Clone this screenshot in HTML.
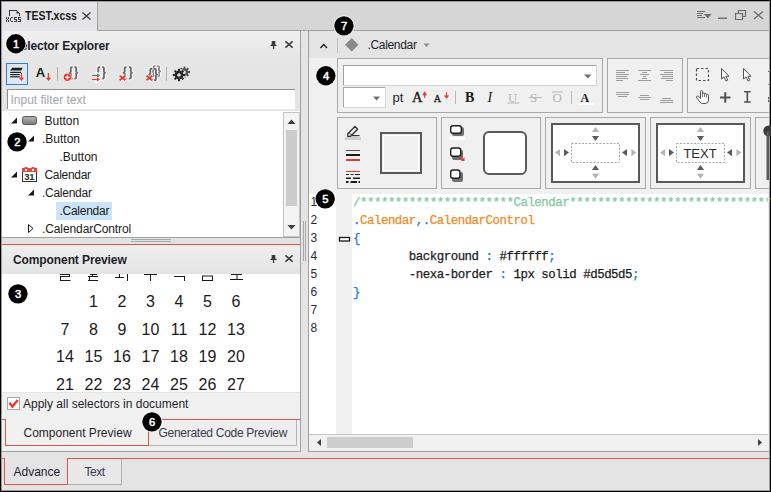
<!DOCTYPE html>
<html><head><meta charset="utf-8">
<style>
*{margin:0;padding:0}
html,body{width:771px;height:492px;overflow:hidden;background:#000}
svg{display:block;font-family:"Liberation Sans",sans-serif;font-size:12px}
</style></head><body>
<svg width="771" height="492" viewBox="0 0 771 492">
<!-- frame -->
<rect x="0" y="0" width="771" height="492" fill="#000"/>
<rect x="1" y="1" width="769" height="490" fill="#9c9c9c"/>
<rect x="2" y="2" width="767" height="488" fill="#e4e4e4"/>
<!-- tab bar -->
<rect x="2" y="2" width="767" height="28" fill="#d6d6d6"/>
<rect x="97" y="30" width="672" height="1" fill="#a3a3a3"/>
<rect x="2" y="2" width="95" height="29" fill="#e4e4e6"/>
<rect x="97" y="2" width="1" height="29" fill="#a3a3a3"/>
<!-- xcss file icon -->
<g fill="#3a3a3a">
<rect x="9" y="10" width="1" height="6"/><rect x="9" y="10" width="8" height="1"/><rect x="19" y="13" width="1" height="3"/>
<path d="M16.5 10L20 13.5H16.5Z"/>
<rect x="6" y="17" width="1" height="1"/><rect x="6" y="18" width="1" height="1"/><rect x="6" y="20" width="1" height="1"/><rect x="6" y="21" width="1" height="1"/><rect x="7" y="19" width="1" height="1"/><rect x="8" y="17" width="1" height="1"/><rect x="8" y="18" width="1" height="1"/><rect x="8" y="20" width="1" height="1"/><rect x="8" y="21" width="1" height="1"/><rect x="10" y="18" width="1" height="1"/><rect x="10" y="19" width="1" height="1"/><rect x="10" y="20" width="1" height="1"/><rect x="11" y="17" width="1" height="1"/><rect x="11" y="21" width="1" height="1"/><rect x="12" y="17" width="1" height="1"/><rect x="12" y="21" width="1" height="1"/><rect x="14" y="17" width="1" height="1"/><rect x="14" y="18" width="1" height="1"/><rect x="14" y="19" width="1" height="1"/><rect x="14" y="21" width="1" height="1"/><rect x="15" y="17" width="1" height="1"/><rect x="15" y="19" width="1" height="1"/><rect x="15" y="21" width="1" height="1"/><rect x="16" y="17" width="1" height="1"/><rect x="16" y="19" width="1" height="1"/><rect x="16" y="20" width="1" height="1"/><rect x="16" y="21" width="1" height="1"/><rect x="18" y="17" width="1" height="1"/><rect x="18" y="18" width="1" height="1"/><rect x="18" y="19" width="1" height="1"/><rect x="18" y="21" width="1" height="1"/><rect x="19" y="17" width="1" height="1"/><rect x="19" y="19" width="1" height="1"/><rect x="19" y="21" width="1" height="1"/><rect x="20" y="17" width="1" height="1"/><rect x="20" y="19" width="1" height="1"/><rect x="20" y="20" width="1" height="1"/><rect x="20" y="21" width="1" height="1"/>
</g>
<text transform="translate(25 19.5) scale(0.875 1)" font-weight="bold" fill="#1a1a1a">TEST.xcss</text>
<path d="M82.5 12.5L90.5 19.5M90.5 12.5L82.5 19.5" stroke="#3a3a3a" stroke-width="1.2"/>
<!-- window buttons -->
<g fill="#707070">
<rect x="697" y="11" width="8" height="1"/><rect x="697" y="13" width="6" height="1"/><rect x="697" y="15" width="5" height="1"/><rect x="697" y="17" width="8" height="1"/>
<path d="M704 14H711.5L707.75 18.5Z"/>
<rect x="718" y="17.5" width="9" height="1.5"/>
</g>
<path d="M735.5 13.5H742.5V19.5H735.5ZM738.5 13.5V10.5H745.5V16.5H742.5" fill="none" stroke="#6c6c6c" stroke-width="1.2"/>
<path d="M754 11.5L763 19M763 11.5L754 19" stroke="#6c6c6c" stroke-width="1.3"/>
<!-- ===== LEFT PANEL ===== -->
<defs>
<linearGradient id="lpg" x1="0" y1="0" x2="0" y2="1">
<stop offset="0" stop-color="#f0f0f0"/><stop offset="0.35" stop-color="#e6e6e6"/><stop offset="1" stop-color="#e3e3e3"/>
</linearGradient>
<linearGradient id="cpg" x1="0" y1="0" x2="0" y2="1">
<stop offset="0" stop-color="#efefef"/><stop offset="1" stop-color="#e3e3e3"/>
</linearGradient>
</defs>
<rect x="2" y="31" width="298" height="80" fill="url(#lpg)"/>
<rect x="300" y="31" width="1" height="421" fill="#a0a0a0"/>
<rect x="2" y="451" width="299" height="1" fill="#a0a0a0"/>
<text x="13" y="49.5" font-weight="bold" letter-spacing="-0.17" fill="#1e1e2a">Selector Explorer</text>
<!-- pin + close -->
<g fill="#3a3a3a">
<path d="M271.7 41H275.3V44.2L277.1 46H269.9L271.7 44.2Z"/><rect x="272.9" y="46" width="1.3" height="3"/>
</g>
<path d="M285.4 41.4L292.6 47.6M292.6 41.4L285.4 47.6" stroke="#3a3a3a" stroke-width="1.5"/>
<!-- toolbar button 1 pressed -->
<rect x="6.5" y="63.5" width="21" height="21" fill="#dde6f1" stroke="#2f7fd6" stroke-width="1"/>
<g fill="#1e1e1e">
<path d="M12.2 67.8H22.8L21.2 70.6H10.2Z"/>
<rect x="10.2" y="71.8" width="11" height="1.2"/><rect x="10.2" y="74" width="9.5" height="1.2"/><rect x="10.2" y="76.2" width="9.5" height="1.2"/>
</g>
<g fill="#e8392a">
<rect x="20.8" y="73" width="1.3" height="6"/><path d="M18.8 77.8H24.1L21.45 81Z"/>
</g>
<text x="35.8" y="77" font-weight="bold" font-size="13" fill="#1e1e1e">A</text>
<g fill="#e8392a"><rect x="47.8" y="73" width="1.3" height="6"/><path d="M45.8 77.8H51.1L48.45 81Z"/></g>
<rect x="57" y="67" width="1" height="14" fill="#b0b0b0"/>
<!-- braces icons -->
<path d="M72.60 67.10H71.70Q70.80 67.10 70.80 68.10V71.75L69.80 72.85L70.80 73.95V77.60Q70.80 78.60 71.70 78.60H72.60M74.40 67.10H75.30Q76.20 67.10 76.20 68.10V71.75L77.20 72.85L76.20 73.95V77.60Q76.20 78.60 75.30 78.60H74.40" fill="none" stroke="#fff" stroke-width="3.6" stroke-linejoin="round" opacity="0.9"/><path d="M72.60 67.10H71.70Q70.80 67.10 70.80 68.10V71.75L69.80 72.85L70.80 73.95V77.60Q70.80 78.60 71.70 78.60H72.60M74.40 67.10H75.30Q76.20 67.10 76.20 68.10V71.75L77.20 72.85L76.20 73.95V77.60Q76.20 78.60 75.30 78.60H74.40" fill="none" stroke="#6a6a6a" stroke-width="1.9"/>
<path d="M100.10 67.10H99.20Q98.30 67.10 98.30 68.10V71.75L97.30 72.85L98.30 73.95V77.60Q98.30 78.60 99.20 78.60H100.10M102.10 67.10H103.00Q103.90 67.10 103.90 68.10V71.75L104.90 72.85L103.90 73.95V77.60Q103.90 78.60 103.00 78.60H102.10" fill="none" stroke="#fff" stroke-width="3.6" stroke-linejoin="round" opacity="0.9"/><path d="M100.10 67.10H99.20Q98.30 67.10 98.30 68.10V71.75L97.30 72.85L98.30 73.95V77.60Q98.30 78.60 99.20 78.60H100.10M102.10 67.10H103.00Q103.90 67.10 103.90 68.10V71.75L104.90 72.85L103.90 73.95V77.60Q103.90 78.60 103.00 78.60H102.10" fill="none" stroke="#6a6a6a" stroke-width="1.9"/>
<path d="M126.50 67.10H125.60Q124.70 67.10 124.70 68.10V71.75L123.70 72.85L124.70 73.95V77.60Q124.70 78.60 125.60 78.60H126.50M129.00 67.10H129.90Q130.80 67.10 130.80 68.10V71.75L131.80 72.85L130.80 73.95V77.60Q130.80 78.60 129.90 78.60H129.00" fill="none" stroke="#fff" stroke-width="3.6" stroke-linejoin="round" opacity="0.9"/><path d="M126.50 67.10H125.60Q124.70 67.10 124.70 68.10V71.75L123.70 72.85L124.70 73.95V77.60Q124.70 78.60 125.60 78.60H126.50M129.00 67.10H129.90Q130.80 67.10 130.80 68.10V71.75L131.80 72.85L130.80 73.95V77.60Q130.80 78.60 129.90 78.60H129.00" fill="none" stroke="#6a6a6a" stroke-width="1.9"/>
<path d="M155.40 66.10H154.50Q153.60 66.10 153.60 67.10V70.20L152.60 71.30L153.60 72.40V75.50Q153.60 76.50 154.50 76.50H155.40M157.20 66.10H158.10Q159.00 66.10 159.00 67.10V70.20L160.00 71.30L159.00 72.40V75.50Q159.00 76.50 158.10 76.50H157.20" fill="none" stroke="#fff" stroke-width="3.6" stroke-linejoin="round" opacity="0.9"/><path d="M155.40 66.10H154.50Q153.60 66.10 153.60 67.10V70.20L152.60 71.30L153.60 72.40V75.50Q153.60 76.50 154.50 76.50H155.40M157.20 66.10H158.10Q159.00 66.10 159.00 67.10V70.20L160.00 71.30L159.00 72.40V75.50Q159.00 76.50 158.10 76.50H157.20" fill="none" stroke="#8a8a8a" stroke-width="1.9"/>
<path d="M152.10 68.80H151.20Q150.30 68.80 150.30 69.80V73.40L149.30 74.50L150.30 75.60V79.20Q150.30 80.20 151.20 80.20H152.10M154.10 68.80H155.00Q155.90 68.80 155.90 69.80V73.40L156.90 74.50L155.90 75.60V79.20Q155.90 80.20 155.00 80.20H154.10" fill="none" stroke="#fff" stroke-width="3.6" stroke-linejoin="round" opacity="0.9"/><path d="M152.10 68.80H151.20Q150.30 68.80 150.30 69.80V73.40L149.30 74.50L150.30 75.60V79.20Q150.30 80.20 151.20 80.20H152.10M154.10 68.80H155.00Q155.90 68.80 155.90 69.80V73.40L156.90 74.50L155.90 75.60V79.20Q155.90 80.20 155.00 80.20H154.10" fill="none" stroke="#6a6a6a" stroke-width="1.9"/>
<circle cx="67.4" cy="77.3" r="4.3" fill="#fff" opacity="0.8"/><circle cx="67.4" cy="77.3" r="3.7" fill="#e8392a"/>
<path d="M65.1 77.3H69.7M67.4 75V79.6" stroke="#fff" stroke-width="1.3"/>
<path d="M91.5 75.5H98.5M91.5 79.5H98.5M96.5 72.8L101 75.5L96.5 78.2ZM96.5 76.8L101 79.5L96.5 82.2Z" stroke="#fff" stroke-width="2.4" fill="#fff" stroke-linejoin="round" opacity="0.9"/>
<path d="M92 75.5H98" stroke="#6a6a6a" stroke-width="1.3"/><path d="M97 73.5L100.2 75.5L97 77.5Z" fill="#6a6a6a"/>
<path d="M92 79.5H98" stroke="#e8392a" stroke-width="1.3"/><path d="M97 77.5L100.2 79.5L97 81.5Z" fill="#e8392a"/>
<path d="M119.6 75.6L125.4 80.3M125.4 75.6L119.6 80.3" stroke="#fff" stroke-width="3.4" opacity="0.8"/>
<path d="M119.6 75.6L125.4 80.3M125.4 75.6L119.6 80.3" stroke="#e8392a" stroke-width="1.8"/>
<path d="M146.4 75.6L152.4 80.3M152.4 75.6L146.4 80.3" stroke="#fff" stroke-width="3.4" opacity="0.8"/>
<path d="M146.4 75.6L152.4 80.3M152.4 75.6L146.4 80.3" stroke="#e8392a" stroke-width="1.8"/>
<rect x="166" y="67" width="1" height="14" fill="#b0b0b0"/>
<!-- gear -->
<circle cx="184.5" cy="72" r="3.8" fill="#555"/><path d="M187.80 72.00L190.10 72.00M186.83 74.33L188.46 75.96M184.50 75.30L184.50 77.60M182.17 74.33L180.54 75.96M181.20 72.00L178.90 72.00M182.17 69.67L180.54 68.04M184.50 68.70L184.50 66.40M186.83 69.67L188.46 68.04" stroke="#555" stroke-width="1.8"/><circle cx="184.5" cy="72" r="1.3" fill="#e4e4e4"/>
<circle cx="179" cy="75" r="6.4" fill="#e4e4e4" opacity="0.8"/><circle cx="179" cy="75" r="4.4" fill="#2a2a2a"/><path d="M182.90 75.00L185.20 75.00M181.76 77.76L183.38 79.38M179.00 78.90L179.00 81.20M176.24 77.76L174.62 79.38M175.10 75.00L172.80 75.00M176.24 72.24L174.62 70.62M179.00 71.10L179.00 68.80M181.76 72.24L183.38 70.62" stroke="#2a2a2a" stroke-width="2.1"/><circle cx="179" cy="75" r="1.8" fill="#e4e4e4"/>
<!-- filter input -->
<rect x="7" y="89" width="288" height="21" fill="#fff"/>
<rect x="7" y="89" width="288" height="1" fill="#8e8e8e"/>
<rect x="7" y="89" width="1" height="21" fill="#8e8e8e"/>
<rect x="7" y="109" width="288" height="1" fill="#e9e9e9"/>
<text x="10.5" y="103.8" fill="#a4a4ac">Input filter text</text>
<!-- tree -->
<rect x="2" y="111" width="298" height="126" fill="#fff"/>
<rect x="2" y="237" width="298" height="1" fill="#a0a0a0"/>
<!-- tree scrollbar -->
<rect x="283" y="112" width="17" height="125" fill="#c4c4c4"/>
<rect x="284" y="113" width="15" height="123" fill="#f3f3f3"/>
<path d="M287.5 124H295.5L291.5 119.5Z" fill="#404040"/>
<rect x="286" y="130" width="11" height="76" fill="#cbcbcb"/>
<path d="M287.5 225H295.5L291.5 229.5Z" fill="#404040"/>
<g fill="#1a1a1a">
<path d="M11 123.5H17V117.5Z"/>
<path d="M28 141.5H34V135.5Z"/>
<path d="M11 177.5H17V171.5Z"/>
<path d="M28 195.5H34V189.5Z"/>
</g>
<path d="M28.5 224.5V232.5L33 228.5Z" fill="none" stroke="#1a1a1a" stroke-width="1"/>
<!-- button icon -->
<defs><linearGradient id="btg" x1="0" y1="0" x2="0" y2="1"><stop offset="0" stop-color="#b8b8b8"/><stop offset="1" stop-color="#7a7a7a"/></linearGradient></defs>
<rect x="22.5" y="116.5" width="14" height="8" rx="2" fill="url(#btg)" stroke="#555" stroke-width="1"/>
<!-- calendar icon -->
<rect x="22.5" y="171.5" width="14" height="10" fill="#fff" stroke="#333" stroke-width="1"/>
<rect x="22" y="168" width="15" height="4" fill="#e5483a"/>
<rect x="24.5" y="167" width="3" height="1" fill="#e5483a"/><rect x="31.5" y="167" width="3" height="1" fill="#e5483a"/>
<rect x="25" y="169" width="2" height="2" fill="#fff"/><rect x="32" y="169" width="2" height="2" fill="#fff"/>
<text x="24.3" y="179.9" font-weight="bold" font-size="9.4" letter-spacing="-0.2" fill="#2a2a2a">31</text>
<rect x="56" y="202" width="56" height="18" fill="#cce4f7"/>
<g fill="#1a1a1a">
<text x="44.5" y="124.7">Button</text>
<text x="42" y="143">.Button</text>
<text x="59.5" y="161">.Button</text>
<text x="44.5" y="179" letter-spacing="-0.3">Calendar</text>
<text x="42" y="196.5" letter-spacing="-0.27">.Calendar</text>
<text x="59.5" y="214.5" letter-spacing="-0.27">.Calendar</text>
<text x="42" y="232.5" letter-spacing="-0.1">.CalendarControl</text>
</g>
<!-- splitter -->
<rect x="2" y="238" width="298" height="6" fill="#e2e2e2"/>
<rect x="131" y="239" width="40" height="1" fill="#a8a8a8"/>
<rect x="131" y="241" width="40" height="1" fill="#a8a8a8"/>
<!-- component preview header -->
<rect x="2" y="245" width="298" height="29" fill="url(#cpg)"/>
<text x="13" y="263.7" font-weight="bold" letter-spacing="-0.1" fill="#1e1e2a">Component Preview</text>
<g fill="#3a3a3a"><path d="M271.7 255H275.3V258.2L277.1 260H269.9L271.7 258.2Z"/><rect x="272.9" y="260" width="1.3" height="3"/></g>
<path d="M285.4 255.4L292.6 261.6M292.6 255.4L285.4 261.6" stroke="#3a3a3a" stroke-width="1.5"/>
<!-- calendar preview -->
<rect x="2" y="274" width="298" height="118" fill="#fff"/>
<g fill="#1a1a1a">
<rect x="60" y="274" width="10" height="1"/><rect x="69" y="274" width="1" height="3"/><rect x="60" y="276" width="10" height="1"/><rect x="60" y="276" width="1" height="4"/><rect x="60" y="280" width="10.5" height="1"/>
<rect x="90" y="274" width="7" height="1"/><rect x="88" y="276" width="10" height="1"/><rect x="92" y="274" width="1" height="2"/><rect x="89" y="277" width="1" height="3"/><rect x="88" y="280" width="10" height="1"/>
<rect x="115" y="277" width="9" height="1"/><rect x="119" y="274" width="1" height="3"/><rect x="127" y="274" width="1" height="7"/>
<rect x="144" y="274" width="13" height="1"/><rect x="150" y="274" width="1" height="7"/>
<rect x="174" y="276" width="11" height="1"/><rect x="184" y="276" width="1" height="5"/>
<rect x="202.5" y="276" width="10" height="4.5" fill="none" stroke="#1a1a1a" stroke-width="1"/>
<rect x="231" y="274" width="11" height="1"/><rect x="236.5" y="274" width="1" height="5"/><rect x="230" y="279" width="13" height="1"/>
</g>
<g font-size="16" fill="#1a1a1a" text-anchor="middle">
<text x="93.5" y="307">1</text><text x="122" y="307">2</text><text x="150.5" y="307">3</text><text x="179" y="307">4</text><text x="207.5" y="307">5</text><text x="236" y="307">6</text>
<text x="65" y="335">7</text><text x="93.5" y="335">8</text><text x="122" y="335">9</text><text x="150.5" y="335">10</text><text x="179" y="335">11</text><text x="207.5" y="335">12</text><text x="236" y="335">13</text>
<text x="65" y="362">14</text><text x="93.5" y="362">15</text><text x="122" y="362">16</text><text x="150.5" y="362">17</text><text x="179" y="362">18</text><text x="207.5" y="362">19</text><text x="236" y="362">20</text>
<text x="65" y="390">21</text><text x="93.5" y="390">22</text><text x="122" y="390">23</text><text x="150.5" y="390">24</text><text x="179" y="390">25</text><text x="207.5" y="390">26</text><text x="236" y="390">27</text>
</g>
<!-- apply bar -->
<rect x="2" y="393" width="298" height="58" fill="#f0f0f0"/>
<rect x="7.5" y="397.5" width="12" height="12" fill="#fff" stroke="#a8a8a8" stroke-width="1"/>
<path d="M9.3 402.8L12.4 406.6L17.8 400" fill="none" stroke="#ec3b2c" stroke-width="2.3"/>
<text x="23" y="407.8" fill="#1e1e2a">Apply all selectors in document</text>
<!-- bottom tabs of left panel -->
<rect x="148" y="419" width="149" height="27" fill="#eeeeee"/>
<rect x="296" y="419" width="1" height="27" fill="#b4b4b4"/>
<rect x="148" y="445" width="149" height="1" fill="#b4b4b4"/>
<text x="23.5" y="437" fill="#1e1e2a">Component Preview</text>
<text x="158.5" y="436.5" letter-spacing="-0.28" fill="#3a3a4a">Generated Code Preview</text>
<g fill="#e05545">
<rect x="2" y="419" width="4" height="1"/>
<rect x="5" y="419" width="1" height="27"/>
<rect x="5" y="445" width="144" height="1"/>
<rect x="148" y="419" width="1" height="27"/>
<rect x="148" y="419" width="152" height="1"/>
<rect x="2" y="244" width="298" height="1"/>
</g>
<!-- ===== GAP ===== -->
<rect x="301" y="31" width="7" height="421" fill="#e4e4e4"/>
<rect x="308" y="31" width="1" height="421" fill="#a0a0a0"/>
<rect x="303" y="221" width="1" height="40" fill="#a8a8a8"/>
<rect x="305" y="221" width="1" height="40" fill="#a8a8a8"/>
<!-- ===== RIGHT PANEL ===== -->
<rect x="309" y="31" width="460" height="420" fill="#f0f0f0"/>
<rect x="309" y="31" width="460" height="27" fill="#e4e4e4"/>
<rect x="309" y="451" width="460" height="1" fill="#a0a0a0"/>
<path d="M320.5 48L323.75 44.5L327 48" fill="none" stroke="#1a1a1a" stroke-width="1.3"/>
<rect x="337" y="38" width="1" height="15" fill="#c0c0c0"/>
<path d="M351.75 38L358.5 44.75L351.75 51.5L345 44.75Z" fill="#8a8a8a"/>
<text x="367.5" y="48.7" letter-spacing="-0.33" fill="#1e1e2a">.Calendar</text>
<path d="M423.5 43.5H429.5L426.5 47Z" fill="#8a8a8a"/>
<!-- group 1: font -->
<rect x="337" y="58" width="266" height="55" fill="#a9a9a9"/>
<rect x="338" y="59" width="264" height="53" fill="#f0f0f0"/>
<rect x="343" y="65" width="254" height="21" fill="#d4d4d4"/>
<rect x="343" y="65" width="253" height="20" fill="#a0a0a0"/>
<rect x="344" y="66" width="252" height="19" fill="#fff"/>
<path d="M584 74.5H591.5L587.75 78.5Z" fill="#707070"/>
<rect x="343" y="87" width="43" height="21" fill="#d8d8d8"/>
<rect x="343" y="87" width="42" height="20" fill="#a8a8a8"/>
<rect x="344" y="88" width="41" height="19" fill="#fff"/>
<path d="M373 96.5H380L376.5 100.5Z" fill="#707070"/>
<text x="392.5" y="101.5" font-size="13" fill="#1e1e2a">pt</text>
<text x="412" y="101.8" font-family="Liberation Serif" font-size="14.6" fill="#1a1a1a" stroke="#1a1a1a" stroke-width="0.35">A</text>
<g fill="#e8392a"><rect x="424.1" y="93.8" width="1.2" height="4"/><path d="M422.3 95.3H427.1L424.7 91.3Z"/></g>
<text x="433.8" y="101.8" font-family="Liberation Serif" font-size="10.2" fill="#1a1a1a" stroke="#1a1a1a" stroke-width="0.3">A</text>
<g fill="#e8392a"><rect x="445.9" y="92.3" width="1.2" height="4"/><path d="M443.8 95.6H449.2L446.5 98.8Z"/></g>
<rect x="455" y="91" width="1" height="13" fill="#b8b8b8"/>
<text x="465" y="102.3" font-family="Liberation Serif" font-weight="bold" font-size="14" fill="#1a1a1a">B</text>
<text x="487.5" y="102.3" font-family="Liberation Serif" font-style="italic" font-size="14" fill="#1a1a1a">I</text>
<g font-family="Liberation Serif" font-size="13" fill="#b4b4b4">
<text x="508" y="102.3">U</text><text x="530" y="102.3">S</text><text x="552.5" y="102.3">O</text>
</g>
<rect x="507.5" y="102.5" width="12" height="1" fill="#b4b4b4"/>
<rect x="529" y="97" width="13" height="1" fill="#b4b4b4"/>
<rect x="552" y="91.5" width="11" height="1" fill="#b4b4b4"/>
<rect x="571" y="91" width="1" height="13" fill="#b8b8b8"/>
<text x="580.5" y="101.5" font-family="Liberation Serif" font-weight="bold" font-size="12" fill="#1a1a1a">A</text>
<rect x="578" y="103" width="16" height="2" fill="#fff"/>
<!-- group 2: align -->
<rect x="607" y="58" width="76" height="55" fill="#a9a9a9"/>
<rect x="608" y="59" width="74" height="53" fill="#f0f0f0"/>
<g fill="#9c9c9c">
<rect x="616" y="70" width="13" height="1"/>
<rect x="660" y="70" width="13" height="1"/>
<rect x="616" y="72" width="9" height="1"/>
<rect x="664" y="72" width="9" height="1"/>
<rect x="616" y="74" width="13" height="1"/>
<rect x="660" y="74" width="13" height="1"/>
<rect x="616" y="76" width="11" height="1"/>
<rect x="662" y="76" width="11" height="1"/>
<rect x="616" y="78" width="12" height="1"/>
<rect x="661" y="78" width="12" height="1"/>
<rect x="616" y="80" width="7" height="1"/>
<rect x="666" y="80" width="7" height="1"/>
<rect x="638.0" y="70" width="13" height="1"/>
<rect x="642.0" y="72" width="5" height="1"/>
<rect x="640.0" y="74" width="9" height="1"/>
<rect x="643.0" y="76" width="3" height="1"/>
<rect x="642.0" y="78" width="5" height="1"/>
<rect x="638.0" y="80" width="13" height="1"/>
<rect x="616.0" y="92" width="13" height="1"/>
<rect x="616.0" y="94" width="13" height="1"/>
<rect x="618.0" y="96" width="9" height="1"/>
<rect x="640.0" y="95" width="9" height="1"/>
<rect x="638.0" y="97" width="13" height="1"/>
<rect x="640.0" y="99" width="9" height="1"/>
<rect x="662.0" y="98" width="9" height="1"/>
<rect x="660.0" y="100" width="13" height="1"/>
<rect x="660.0" y="102" width="13" height="1"/>
</g>
<!-- group 3: tools -->
<rect x="687" y="58" width="82" height="55" fill="#a9a9a9"/>
<rect x="688" y="59" width="81" height="53" fill="#f0f0f0"/>
<rect x="696.5" y="68.5" width="12" height="12" fill="none" stroke="#505050" stroke-width="1.2" stroke-dasharray="2.5 2"/>
<path d="M721.5 68.5V79L724 76.8L726 81L727.8 80.2L725.8 76.2H729Z" fill="#fff" stroke="#505050" stroke-width="1"/>
<path d="M743.5 68.5V79L746 76.8L748 81L749.8 80.2L747.8 76.2H751Z" fill="#fff" stroke="#505050" stroke-width="1"/>
<path d="M700.5 98.5V91.5Q700.5 90.5 701.5 90.5Q702.5 90.5 702.5 91.5V94Q702.5 93 703.5 93Q704.5 93 704.5 94V94.5Q704.5 93.5 705.5 93.5Q706.5 93.5 706.5 94.5V95.5Q706.5 94.5 707.5 94.5Q708.5 94.5 708.5 95.5V100Q708.5 103.5 705 103.5H702.5Q700.8 103.5 699.8 101.8L696.5 97.5Q696 96.5 697 96Q698 95.7 699 96.8Z" fill="#fff" stroke="#505050" stroke-width="1"/>
<path d="M702.5 94V97M704.5 94.5V97M706.5 95.5V97.5" stroke="#505050" stroke-width="0.8"/>
<rect x="720" y="96.5" width="10.5" height="2" fill="#505050"/>
<rect x="724.25" y="92.2" width="2" height="10.5" fill="#505050"/>
<rect x="746.5" y="91" width="1.6" height="11.7" fill="#505050"/>
<rect x="744" y="91" width="6.8" height="1.4" fill="#505050"/>
<rect x="744" y="101.3" width="6.8" height="1.4" fill="#505050"/>
<rect x="768" y="71" width="1" height="1" fill="#555"/><rect x="768" y="84" width="1" height="1" fill="#777"/><rect x="768" y="97" width="1" height="2" fill="#555"/><rect x="768" y="100" width="1" height="2" fill="#555"/>
<!-- row 2 groups -->
<rect x="337" y="117" width="100" height="72" fill="#a9a9a9"/>
<rect x="338" y="118" width="98" height="70" fill="#f0f0f0"/>
<rect x="441" y="117" width="100" height="72" fill="#a9a9a9"/>
<rect x="442" y="118" width="98" height="70" fill="#f0f0f0"/>
<rect x="545" y="117" width="101" height="72" fill="#a9a9a9"/>
<rect x="546" y="118" width="99" height="70" fill="#f0f0f0"/>
<rect x="650" y="117" width="101" height="72" fill="#a9a9a9"/>
<rect x="651" y="118" width="99" height="70" fill="#f0f0f0"/>
<rect x="755" y="117" width="14" height="72" fill="#a9a9a9"/>
<rect x="756" y="118" width="13" height="70" fill="#f0f0f0"/>
<circle cx="768.8" cy="131" r="5.5" fill="#3a3a3a"/><rect x="766.5" y="131" width="2.5" height="49" fill="#5a5a5a"/>
<!-- group A -->
<path d="M347.8 133.8L355 126.6L357.6 129.2L350.4 136.4H347.8Z" fill="none" stroke="#333" stroke-width="1.4" stroke-linejoin="round"/>
<path d="M349 132.5L351.7 135.2" stroke="#333" stroke-width="1"/>
<rect x="352" y="135" width="7.5" height="1.2" fill="#333"/>
<rect x="345" y="137" width="16" height="3" fill="#cfcfcf"/>
<rect x="346" y="150" width="14" height="1" fill="#505050"/>
<rect x="346" y="154" width="14" height="2" fill="#1a1a1a"/>
<rect x="346" y="159" width="14" height="2" fill="#e8392a"/>
<rect x="346" y="171" width="14" height="1" fill="#e8392a"/>
<g fill="#1a1a1a"><rect x="346" y="174" width="3" height="1"/><rect x="350.5" y="174" width="3" height="1"/><rect x="355" y="174" width="5" height="1"/>
<rect x="346" y="177.5" width="5" height="1.5"/><rect x="353" y="177.5" width="7" height="1.5"/>
<rect x="346" y="181" width="2.5" height="2"/><rect x="350.5" y="181" width="6.5" height="2"/><rect x="358.5" y="181" width="1.5" height="2"/></g>
<rect x="380.5" y="132.5" width="41" height="41" fill="none" stroke="#fff" stroke-width="1"/><rect x="383.5" y="135.5" width="35" height="35" fill="none" stroke="#fff" stroke-width="1"/><rect x="381" y="133" width="40" height="40" fill="none" stroke="#5a5a5a" stroke-width="2"/>
<!-- group B -->
<g fill="#5a5a5a" opacity="0.85">
<rect x="452" y="127" width="12" height="9" rx="2"/>
<rect x="452" y="150" width="11" height="10" rx="2"/>
<rect x="452" y="172" width="11" height="10" rx="2"/>
</g>
<g fill="#fff" stroke="#1e1e1e" stroke-width="1.4">
<rect x="450.7" y="125.7" width="10.6" height="7.6" rx="2.2"/>
<rect x="450.7" y="148" width="10" height="8.3" rx="2.2"/>
<rect x="450.7" y="170" width="9.2" height="8.3" rx="2.2"/>
</g>
<rect x="449" y="137" width="16" height="3" fill="#fff"/>
<path d="M459.5 156.5L463.2 160.2" stroke="#e8392a" stroke-width="1.3"/><path d="M460.8 161H464.5V157.3Z" fill="#e8392a"/>
<rect x="484" y="132" width="42" height="42" rx="5" fill="#fff" stroke="#5a5a5a" stroke-width="2"/>
<!-- group C -->
<rect x="552" y="124" width="87" height="58" fill="#fff" stroke="#5a5a5a" stroke-width="2"/>
<rect x="571.5" y="143.5" width="48" height="19" fill="none" stroke="#a8a8a8" stroke-width="1" stroke-dasharray="2 1.5"/>
<g fill="#b4b4b4">
<path d="M591.9 132H599.1L595.5 127Z"/><path d="M591.9 173.8H599.1L595.5 178.8Z"/>
<path d="M560 149.0V156.2L555 152.6Z"/><path d="M631.4 149.0V156.2L636.4 152.6Z"/>
</g>
<g fill="#5a5a5a">
<path d="M591.9 136H599.1L595.5 141Z"/><path d="M591.9 170H599.1L595.5 165Z"/>
<path d="M564 149.0V156.2L569 152.6Z"/><path d="M627 149.0V156.2L622 152.6Z"/>
</g>
<!-- group D -->
<rect x="657" y="124" width="87" height="58" fill="#fff" stroke="#5a5a5a" stroke-width="2"/>
<rect x="676.5" y="143.5" width="48" height="19" fill="none" stroke="#a8a8a8" stroke-width="1" stroke-dasharray="2 1.5"/>
<g fill="#b4b4b4">
<path d="M696.9 132H704.1L700.5 127Z"/><path d="M696.9 173.8H704.1L700.5 178.8Z"/>
<path d="M665 149.0V156.2L660 152.6Z"/><path d="M736.4 149.0V156.2L741.4 152.6Z"/>
</g>
<g fill="#5a5a5a">
<path d="M696.9 136H704.1L700.5 141Z"/><path d="M696.9 170H704.1L700.5 165Z"/>
<path d="M669 149.0V156.2L674 152.6Z"/><path d="M732 149.0V156.2L727 152.6Z"/>
</g>
<text x="700" y="157.5" font-size="13" text-anchor="middle" fill="#2a2a2a">TEXT</text>
<!-- editor -->
<rect x="309" y="194" width="460" height="240" fill="#fff"/>
<rect x="336" y="194" width="16" height="240" fill="#f0f0f0"/>
<g font-size="12" fill="#2a2a3a">
<text x="310.5" y="206">1</text><text x="310.5" y="224">2</text><text x="310.5" y="242">3</text><text x="310.5" y="260">4</text><text x="310.5" y="278">5</text><text x="310.5" y="296">6</text><text x="310.5" y="314">7</text><text x="310.5" y="332">8</text>
</g>
<rect x="339.5" y="237.5" width="10" height="3.5" fill="#fff" stroke="#1a1a1a" stroke-width="1.3"/>
<g font-family="Liberation Mono" font-size="12.4" letter-spacing="-0.46" stroke-width="0.25">
<text x="353" y="206" fill="#80c8a0" stroke="#80c8a0">/**********************Calendar****************************************</text>
<text x="353" y="224"><tspan fill="#1f74e0" stroke="#1f74e0">.</tspan><tspan fill="#f28a1e" stroke="#f28a1e">Calendar</tspan><tspan fill="#1f74e0" stroke="#1f74e0">,.</tspan><tspan fill="#f28a1e" stroke="#f28a1e">CalendarControl</tspan></text>
<text x="353" y="242" fill="#1f74e0" stroke="#1f74e0">{</text>
<text x="353" y="260"><tspan fill="#1a1a1a" stroke="#1a1a1a">&#160;&#160;&#160;&#160;&#160;&#160;&#160;&#160;background&#160;</tspan><tspan fill="#1f74e0" stroke="#1f74e0">:</tspan><tspan fill="#1a1a1a" stroke="#1a1a1a">&#160;#ffffff</tspan><tspan fill="#1f74e0" stroke="#1f74e0">;</tspan></text>
<text x="353" y="278"><tspan fill="#1a1a1a" stroke="#1a1a1a">&#160;&#160;&#160;&#160;&#160;&#160;&#160;&#160;-nexa-border&#160;</tspan><tspan fill="#1f74e0" stroke="#1f74e0">:</tspan><tspan fill="#1a1a1a" stroke="#1a1a1a">&#160;1px&#160;solid&#160;#d5d5d5</tspan><tspan fill="#1f74e0" stroke="#1f74e0">;</tspan></text>
<text x="353" y="296" fill="#1f74e0" stroke="#1f74e0">}</text>
</g>
<!-- h scrollbar -->
<rect x="309" y="434" width="460" height="1" fill="#c8c8c8"/>
<rect x="309" y="435" width="460" height="16" fill="#f0f0f0"/>
<path d="M321 439V446L317 442.5Z" fill="#404040"/>
<rect x="327" y="437" width="86" height="11" fill="#cdcdcd"/>
<path d="M758 439V446L762 442.5Z" fill="#404040"/>
<rect x="768" y="189" width="1" height="262" fill="#ececec"/>
<!-- ===== BOTTOM STRIP ===== -->
<rect x="2" y="452" width="767" height="38" fill="#e4e4e4"/>
<rect x="67" y="458" width="55" height="27" fill="#e8e8e8"/>
<rect x="121" y="458" width="1" height="27" fill="#b0b0b0"/>
<rect x="67" y="484" width="55" height="1" fill="#b0b0b0"/>
<text x="13.5" y="476" fill="#1e1e2a">Advance</text>
<text x="84.5" y="476" letter-spacing="-0.45" fill="#3a3a4a">Text</text>
<g fill="#e05545">
<rect x="2" y="458" width="3" height="1"/>
<rect x="4" y="458" width="1" height="27"/>
<rect x="4" y="484" width="64" height="1"/>
<rect x="67" y="458" width="1" height="27"/>
<rect x="67" y="458" width="702" height="1"/>
</g>
<!-- ===== BADGES ===== -->
<g font-family="Liberation Sans" font-size="11.2" fill="#fff" stroke="#fff" stroke-width="0.5" text-anchor="middle">
<circle cx="15.85" cy="43.75" r="10.5" fill="#fff" stroke="none" opacity="0.85"/><circle cx="15.85" cy="43.75" r="9.7" fill="#000" stroke="none"/><text x="16.05" y="47.85">1</text>
<circle cx="17.05" cy="141.85" r="10.5" fill="#fff" stroke="none" opacity="0.85"/><circle cx="17.05" cy="141.85" r="9.7" fill="#000" stroke="none"/><text x="17.25" y="145.95">2</text>
<circle cx="17.95" cy="293.85" r="10.5" fill="#fff" stroke="none" opacity="0.85"/><circle cx="17.95" cy="293.85" r="9.7" fill="#000" stroke="none"/><text x="18.15" y="297.95000000000005">3</text>
<circle cx="325.85" cy="75.75" r="10.5" fill="#fff" stroke="none" opacity="0.85"/><circle cx="325.85" cy="75.75" r="9.7" fill="#000" stroke="none"/><text x="326.05" y="79.85">4</text>
<circle cx="325.2" cy="198.85" r="10.5" fill="#fff" stroke="none" opacity="0.85"/><circle cx="325.2" cy="198.85" r="9.7" fill="#000" stroke="none"/><text x="325.4" y="202.95">5</text>
<circle cx="151.95" cy="421.85" r="10.5" fill="#fff" stroke="none" opacity="0.85"/><circle cx="151.95" cy="421.85" r="9.7" fill="#000" stroke="none"/><text x="152.14999999999998" y="425.95000000000005">6</text>
<circle cx="343.95" cy="25.85" r="10.5" fill="#fff" stroke="none" opacity="0.85"/><circle cx="343.95" cy="25.85" r="9.7" fill="#000" stroke="none"/><text x="344.15" y="29.950000000000003">7</text>
</g>
</svg></body></html>
